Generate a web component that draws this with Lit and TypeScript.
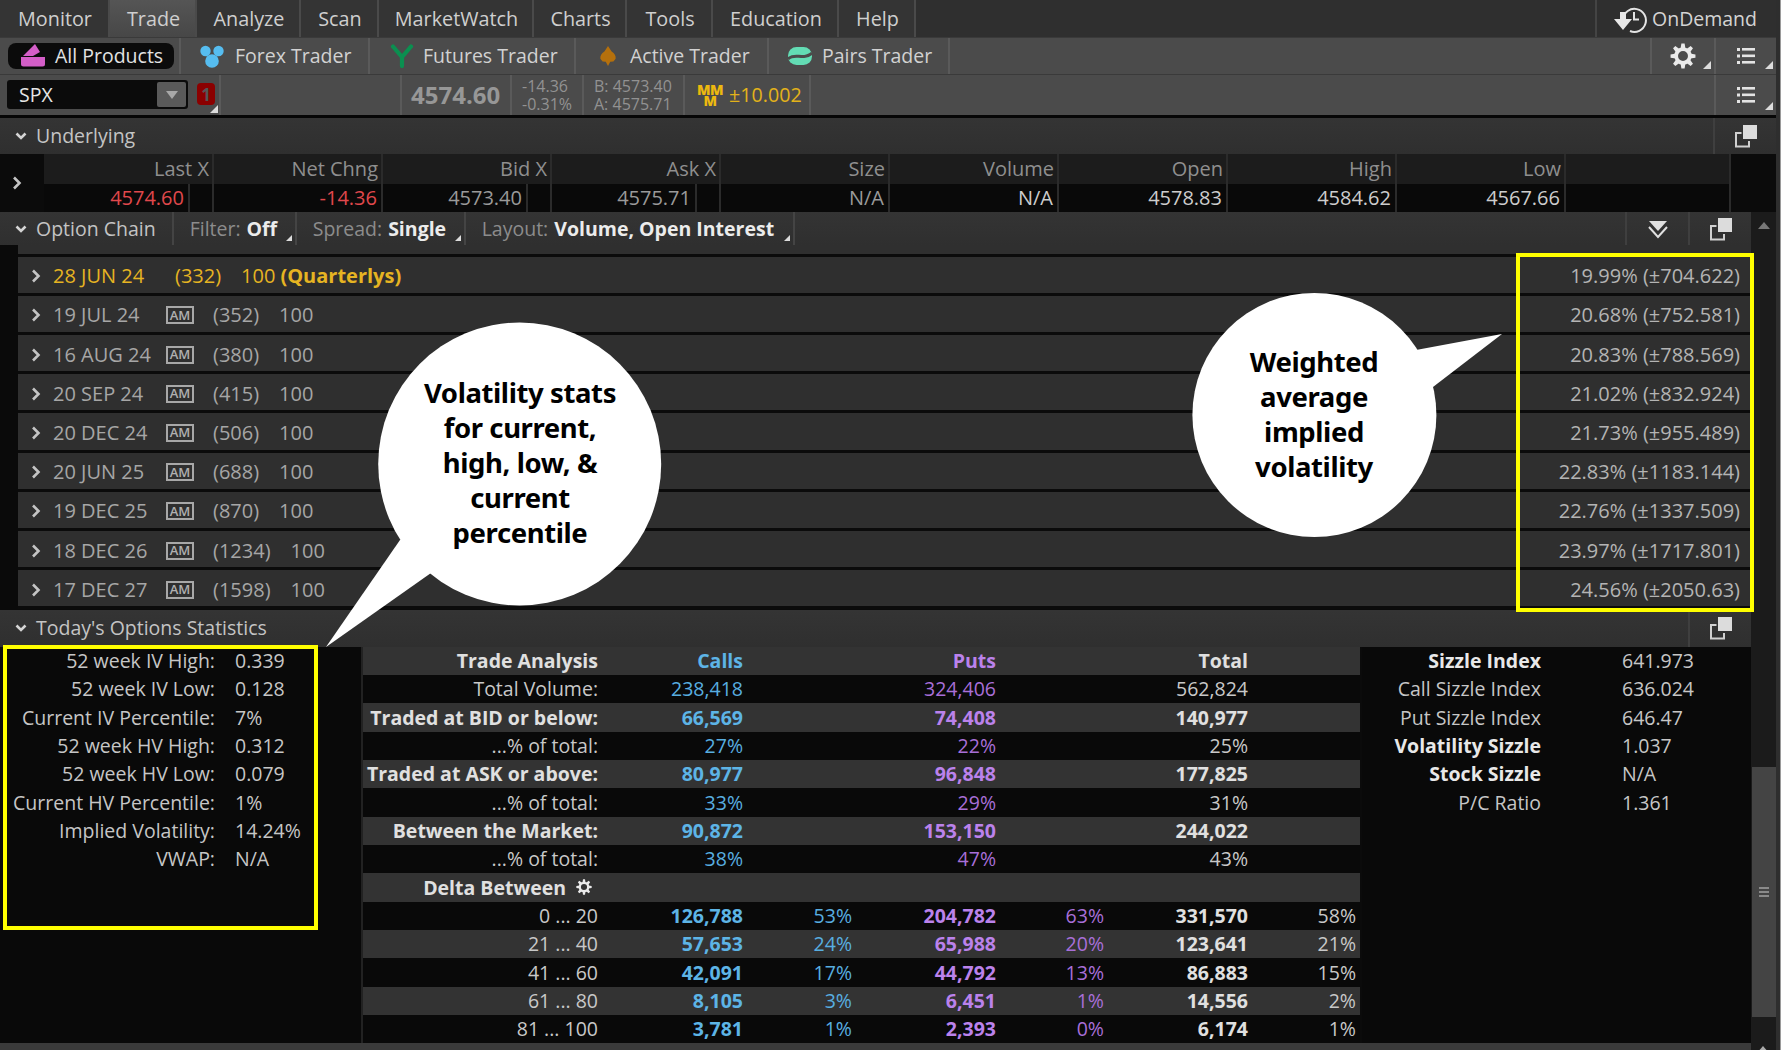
import { LitElement, html, css, svg } from "lit";
import { customElement } from "lit/decorators.js";

const corner = html`<i class="corner"></i>`;
const detach = html`<svg class="detach" viewBox="0 0 24 24" width="24" height="24"><rect x="9" y="1" width="14" height="14" fill="#dcdcdc"/><path d="M7.500 9H2v13.500h13V17" fill="none" stroke="#d0d0d0" stroke-width="2"/></svg>`;
const chevDown = html`<svg class="chev" viewBox="0 0 12 12" width="12" height="12"><path d="M1.500 3.500 6 8l4.500-4.500" fill="none" stroke="#d4d4d4" stroke-width="2.600"/></svg>`;
const chevRight = html`<svg class="chevr" viewBox="0 0 12 14" width="12" height="14"><path d="M3 1.500 8.500 7 3 12.500" fill="none" stroke="#c4c4c4" stroke-width="2.600"/></svg>`;
const listIcon = html`<svg viewBox="0 0 20 20" width="20" height="20"><g fill="#e4e4e4"><rect x="1" y="2" width="3" height="3"/><rect x="1" y="8.500" width="3" height="3"/><rect x="1" y="15" width="3" height="3"/><rect x="6" y="2" width="13" height="2.600"/><rect x="6" y="8.500" width="13" height="2.600"/><rect x="6" y="15" width="13" height="2.600"/></g></svg>`;
const tooth = "M10.500 0.500h3l.8 5h-4.600zM10.500 23.500h3l.8-5h-4.600z";
const gear = (s: number) => html`<svg viewBox="0 0 24 24" width="${s}" height="${s}"><g fill="#eaeaea"><path d="${tooth}"/><path d="${tooth}" transform="rotate(45 12 12)"/><path d="${tooth}" transform="rotate(90 12 12)"/><path d="${tooth}" transform="rotate(135 12 12)"/></g><circle cx="12" cy="12" r="6.300" fill="none" stroke="#eaeaea" stroke-width="3.400"/></svg>`;

const products = [
  { name: "All Products", active: true, w: 24, vb: "0 0 24 24", icon: svg`<path d="M2 12 14 0l5 8-7 4z" fill="#d45ec8"/><path d="M0 13h24v7a2.500 2.500 0 0 1-2.500 2.500h-19A2.500 2.500 0 0 1 0 20z" fill="#d45ec8"/>` },
  { name: "Forex Trader", w: 24, vb: "0 0 24 24", icon: svg`<g fill="#56bdf0"><circle cx="5.500" cy="7" r="5.200"/><circle cx="18.500" cy="7" r="5.200"/><circle cx="12" cy="17" r="6.800"/></g>` },
  { name: "Futures Trader", w: 26, vb: "0 0 24 24", icon: svg`<path d="M3 2.500 12 13 21 2.500M12 13v9" fill="none" stroke="#0b8f50" stroke-width="4.200" stroke-linecap="round"/>` },
  { name: "Active Trader", w: 18, vb: "0 0 20 24", icon: svg`<path d="M10 1 14 7Q19 10 18.500 15L16 18 12.500 18.500 10 23 7.500 18.500 4 18 1.500 15Q1 10 6 7Z" fill="#b5700c"/>` },
  { name: "Pairs Trader", w: 24, vb: "0 0 24 24", icon: svg`<rect x="0" y="3" width="24" height="18" rx="8.500" fill="#63dcb4"/><path d="M0 15C7 8 15 17 24 9" fill="none" stroke="#4b4b4b" stroke-width="3"/>` },
];

const underlying = [
  ["Last X", "4574.60", "red gap24"],
  ["Net Chng", "-14.36", "red"],
  ["Bid X", "4573.40", "gap24"],
  ["Ask X", "4575.71", "gap24"],
  ["Size", "N/A", ""],
  ["Volume", "N/A", "bright"],
  ["Open", "4578.83", "bright"],
  ["High", "4584.62", "bright"],
  ["Low", "4567.66", "bright"],
  ["", "", ""],
];

const chain = [
  ["19 JUL 24", "(352)", "20.68% (±752.581)"],
  ["16 AUG 24", "(380)", "20.83% (±788.569)"],
  ["20 SEP 24", "(415)", "21.02% (±832.924)"],
  ["20 DEC 24", "(506)", "21.73% (±955.489)"],
  ["20 JUN 25", "(688)", "22.83% (±1183.144)"],
  ["19 DEC 25", "(870)", "22.76% (±1337.509)"],
  ["18 DEC 26", "(1234)", "23.97% (±1717.801)"],
  ["17 DEC 27", "(1598)", "24.56% (±2050.63)"],
];

const ivStats = [
  ["52 week IV High:", "0.339"],
  ["52 week IV Low:", "0.128"],
  ["Current IV Percentile:", "7%"],
  ["52 week HV High:", "0.312"],
  ["52 week HV Low:", "0.079"],
  ["Current HV Percentile:", "1%"],
  ["Implied Volatility:", "14.24%"],
  ["VWAP:", "N/A"],
];

const trade: [string, string, string, string, boolean][] = [
  ["Trade Analysis", "Calls", "Puts", "Total", true],
  ["Total Volume:", "238,418", "324,406", "562,824", false],
  ["Traded at BID or below:", "66,569", "74,408", "140,977", true],
  ["...% of total:", "27%", "22%", "25%", false],
  ["Traded at ASK or above:", "80,977", "96,848", "177,825", true],
  ["...% of total:", "33%", "29%", "31%", false],
  ["Between the Market:", "90,872", "153,150", "244,022", true],
  ["...% of total:", "38%", "47%", "43%", false],
];

const delta = [
  ["0 ... 20", "126,788", "53%", "204,782", "63%", "331,570", "58%"],
  ["21 ... 40", "57,653", "24%", "65,988", "20%", "123,641", "21%"],
  ["41 ... 60", "42,091", "17%", "44,792", "13%", "86,883", "15%"],
  ["61 ... 80", "8,105", "3%", "6,451", "1%", "14,556", "2%"],
  ["81 ... 100", "3,781", "1%", "2,393", "0%", "6,174", "1%"],
];

const sizzle: [string, string, boolean][] = [
  ["Sizzle Index", "641.973", true],
  ["Call Sizzle Index", "636.024", false],
  ["Put Sizzle Index", "646.47", false],
  ["Volatility Sizzle", "1.037", true],
  ["Stock Sizzle", "N/A", true],
  ["P/C Ratio", "1.361", false],
];

@customElement("app-root")
export class AppRoot extends LitElement {
  static styles = css`
    :host { display: block; width: 1781px; height: 1050px; }
    * { box-sizing: border-box; }
    .app { position: relative; width: 1781px; height: 1050px; overflow: hidden; display: flex; background: linear-gradient(90deg, #2e2e2e 0 1780px, #9a9a9a 1780px); font: 19.5px/1 "Open Sans", "Noto Sans", sans-serif; color: #c8c8c8; white-space: nowrap; }
    .content { width: 1776px; display: flex; flex-direction: column; background: #0b0b0b; }

    .menu { height: 37px; flex: none; display: flex; background: #2f2f2f; font-size: 19.800px; }
    .tabs { display: grid; grid-template-columns: 110px 87px 104px 78px 155px 93px 86px 126px 77px; }
    .tab { display: flex; align-items: center; justify-content: center; padding-left: 2px; border-right: 2px solid #4a4a4a; color: #cfcfcf; background: #343434; }
    .tab.on { background: linear-gradient(#555, #474747); }
    .menu-fill { flex: 1; }
    .ondemand { width: 181px; display: flex; align-items: center; gap: 5px; padding-left: 16px; border-left: 2px solid #444; color: #d4d4d4; font-size: 19.500px; }

    .products { height: 37px; flex: none; display: flex; background: #4b4b4b; border-top: 1px solid #3a3a3a; }
    .prod { display: flex; align-items: center; border-right: 2px solid #5a5a5a; color: #d2d2d2; }
    .prod svg { flex: none; }
    .prod0 { width: 181px; padding-left: 8px; }
    .pill { width: 166px; height: 26px; background: #0b0b0b; border-radius: 8px; display: flex; align-items: center; gap: 10px; padding-left: 13px; color: #e2e2e2; }
    .prod1 { width: 189px; padding-left: 19px; gap: 11px; }
    .prod2 { width: 206px; padding-left: 19px; gap: 8px; }
    .prod3 { width: 193px; padding-left: 23px; gap: 13px; }
    .prod4 { width: 181px; padding-left: 19px; gap: 10px; }
    .fill { flex: 1; }
    .toolbtn { position: relative; display: flex; align-items: center; justify-content: center; border-left: 2px solid #5a5a5a; }
    .gearbtn { width: 64px; }
    .listbtn { width: 62px; }
    .corner { position: absolute; right: 3px; bottom: 5px; width: 0; height: 0; border-left: 8px solid transparent; border-bottom: 8px solid #dcdcdc; }

    .quote { height: 41px; flex: none; display: flex; background: #4b4b4b; border-top: 1px solid #3a3a3a; }
    .combo { margin: 5px 0 0 7px; width: 181px; height: 29px; background: #0b0b0b; border-radius: 3px; display: flex; align-items: center; justify-content: space-between; padding: 0 2px 0 12px; color: #e6e6e6; }
    .caret { width: 29px; height: 25px; background: #5a5a5a; border-radius: 2px; display: flex; align-items: center; justify-content: center; }
    .caret i { border: 6px solid transparent; border-top: 8px solid #a8a8a8; border-bottom: 0; }
    .badgewrap { position: relative; width: 33px; border-right: 2px solid #5a5a5a; padding: 8px 0 0 9px; }
    .badge { width: 18px; height: 22px; background: #8b0000; border-radius: 4px; display: flex; align-items: center; justify-content: center; color: #555; font-size: 17px; font-weight: 700; }
    .badgewrap .corner { right: 1px; bottom: 2px; }
    .gap181 { width: 181px; border-right: 2px solid #5a5a5a; }
    .q { display: flex; align-items: center; border-right: 2px solid #5a5a5a; color: #a0a0a0; }
    .price { width: 110px; padding-left: 9px; font-size: 24px; font-weight: 700; color: #979797; }
    .two { flex-direction: column; align-items: flex-start; justify-content: center; font-size: 16px; line-height: 18px; color: #929292; }
    .chg { width: 72px; padding-left: 10px; }
    .ba { width: 101px; padding-left: 10px; }
    .mm { width: 126px; padding-left: 11px; gap: 5px; color: #e3b21a; font-size: 19.700px; }
    .mmg { display: flex; flex-direction: column; align-items: center; font-size: 14px; font-weight: 800; line-height: 11px; color: #edb90f; width: 28px; letter-spacing: -0.5px; }

    .rule { height: 3px; flex: none; background: #060606; }

    .secthead { display: flex; align-items: center; height: 36px; background: linear-gradient(#343434, #2f2f2f); color: #c4c4c4; flex: none; }
    .secthead .chev { margin: 0 9px 0 15px; flex: none; }
    .sh-btn { height: 100%; display: flex; align-items: center; justify-content: center; border-left: 2px solid #3f3f3f; }
    .sh-u { width: 63px; }

    .u-table { height: 58px; flex: none; display: flex; background: #0b0b0b; font-size: 20px; }
    .u-toggle { width: 44px; display: flex; align-items: center; padding-left: 11px; }
    .u-grid { width: 1687px; display: grid; grid-template-columns: 170px repeat(8, 169px) 1fr; }
    .u-col { border-right: 2px solid #2b2b2b; }
    .u-h { height: 30px; background: #1c1c1c; color: #8f8f8f; text-align: right; padding: 5px 3px 0 0; }
    .u-d { height: 28px; background: #090909; color: #9a9a9a; text-align: right; padding: 4px 4px 0 0; }
    .u-d.red { color: #e0484c; }
    .u-d.bright { color: #cdcdcd; }
    .u-d.gap24 { padding-right: 0; }
    .u-d.gap24 span { display: inline-block; padding-right: 3px; margin-right: 1px; }
    .u-d.gap24 em { font-style: normal; display: inline-block; width: 2px; height: 28px; background: #2b2b2b; margin: -4px 22px -4px 0; vertical-align: top; }

    .lower { flex: 1; display: flex; min-height: 0; }
    .left { width: 1751px; display: flex; flex-direction: column; }
    .scroll { width: 25px; background: #1b1b1b; position: relative; display: flex; flex-direction: column; align-items: center; }
    .up { margin-top: 10px; border: 6px solid transparent; border-bottom: 7px solid #777; border-top: 0; }
    .thumb { position: absolute; top: 555px; left: 1px; width: 24px; height: 250px; background: #444; display: flex; align-items: center; justify-content: center; }
    .grip { width: 10px; height: 10px; background: repeating-linear-gradient(#8a8a8a 0 2px, transparent 2px 4px); }
    .up2 { position: absolute; bottom: -3px; left: 6px; border: 6px solid transparent; border-bottom: 7px solid #aaa; border-top: 0; }

    .ch-head { height: 33px; }
    .f { height: 100%; display: flex; align-items: center; position: relative; border-left: 2px solid #444; color: #8c8c8c; gap: 6px; }
    .f b { color: #ececec; font-weight: 700; }
    .f .corner { right: 3px; bottom: 4px; border-left-width: 6px; border-bottom-width: 6px; }
    .f1 { margin-left: 16px; width: 123px; padding-left: 16px; }
    .f2 { width: 169px; padding-left: 16px; }
    .f3 { width: 329px; padding-left: 16px; }
    .f4 { width: 1px; padding: 0; }
    .down { width: 63px; }
    .det2 { width: 63px; }

    .chainbody { height: 364.500px; flex: none; display: flex; flex-direction: column; background: #0a0a0a; padding-left: 18px; }
    .sliver { height: 11.500px; flex: none; background: #2f2f2f; border-bottom: 3px solid #0b0b0b; }
    .crow { flex: 1; display: flex; align-items: center; background: #2f2f2f; border-bottom: 3px solid #0b0b0b; color: #a6a6a6; padding: 3px 11px 0 0; font-size: 20px; }
    .crow .chevr { margin: 0 11px 0 12px; }
    .crow.gold { color: #e6b422; }
    .date { width: 113px; }
    .am { width: 28px; height: 18px; margin-right: 19px; border: 2px solid #a8a8a8; font-size: 13px; font-weight: 600; display: flex; align-items: center; justify-content: center; color: #b0b0b0; }
    .cnt { margin-right: 20px; }
    .gold .date { width: 122px; }
    .gold .hundred { margin-right: 5px; }
    .gold b { font-weight: 700; }
    .rv { margin-left: auto; color: #b4b4b4; }

    .stats { flex: 1; display: flex; flex-direction: column; min-height: 0; }
    .st-head { height: 37.200px; }
    .st-head .spacer { flex: 1; }
    .st-body { flex: none; height: 396px; display: grid; grid-template-columns: 363px 997px 1fr; background: #090909; }
    .st-foot { flex: 1; background: #3a3a3a; }
    .iv { display: grid; grid-template-columns: 215px 1fr; grid-auto-rows: 28.330px; column-gap: 20px; border-right: 2px solid #222; align-content: start; }
    .k, .v { display: flex; align-items: center; color: #c6c6c6; }
    .k { justify-content: flex-end; }
    .t { display: grid; grid-template-columns: 239px 145px 109px 144px 108px 144px 108px; grid-auto-rows: 28.330px; }
    .t > div { display: flex; align-items: center; justify-content: flex-end; padding-right: 4px; color: #c8c8c8; }
    .t .g { background: #333; }
    .t .bk { background: #090909; }
    .t .b { font-weight: 700; color: #e0e0e0; }
    .t .c { color: #58aee0; }
    .t .c.b { color: #5db4e6; }
    .t .p { color: #a86fd8; }
    .t .p.b { color: #bb82ec; }
    .t .delta { gap: 10px; padding-right: 10px; }
    .sz { display: grid; grid-template-columns: 179px 1fr; grid-auto-rows: 28.330px; column-gap: 81px; border-left: 2px solid #0b0b0b; align-content: start; }
    .sz .k.b { font-weight: 700; color: #e8e8e8; }

    .callouts { position: absolute; left: 0; top: 0; pointer-events: none; }
    .yb { position: absolute; border: 4px solid #ffff00; }
    .yb1 { left: 1516px; top: 253px; width: 238px; height: 359px; }
    .yb2 { left: 3px; top: 645px; width: 315px; height: 285px; }
    .bt { position: absolute; color: #000; font: 700 27.500px/35px "Noto Sans", sans-serif; text-align: center; letter-spacing: -0.4px; }
    .bt1 { left: 400px; top: 375px; width: 240px; }
    .bt2 { left: 1214px; top: 344px; width: 200px; }
  `;

  render() {
    const tabs = ["Monitor", "Trade", "Analyze", "Scan", "MarketWatch", "Charts", "Tools", "Education", "Help"];
    return html`<div class="app">
      <div class="content">
        <div class="menu">
          <div class="tabs">${tabs.map((t) => html`<div class="tab ${t === "Trade" ? "on" : ""}">${t}</div>`)}</div>
          <div class="menu-fill"></div>
          <div class="ondemand">
            <svg viewBox="0 0 34 28" width="34" height="28"><path d="M10 14A11.500 11.500 0 1 1 17 26" fill="none" stroke="#e4e4e4" stroke-width="2"/><path d="M21 7v7.500h5" fill="none" stroke="#e4e4e4" stroke-width="2"/><path d="M1 14h6V7h6v7h6l-9 11z" fill="#e8e8e8"/></svg>
            OnDemand
          </div>
        </div>
        <div class="products">
          ${products.map((p, i) => {
            const icon = html`<svg viewBox="${p.vb}" width="${p.w}" height="24">${p.icon}</svg>`;
            return html`<div class="prod prod${i}">${p.active ? html`<div class="pill">${icon}${p.name}</div>` : html`${icon}${p.name}`}</div>`;
          })}
          <div class="fill"></div>
          <div class="toolbtn gearbtn">${gear(26)}${corner}</div>
          <div class="toolbtn listbtn">${listIcon}${corner}</div>
        </div>
        <div class="quote">
          <div class="combo">SPX<div class="caret"><i></i></div></div>
          <div class="badgewrap"><div class="badge">1</div>${corner}</div>
          <div class="gap181"></div>
          <div class="q price">4574.60</div>
          <div class="q two chg"><span>-14.36</span><span>-0.31%</span></div>
          <div class="q two ba"><span>B: 4573.40</span><span>A: 4575.71</span></div>
          <div class="q mm"><span class="mmg"><span>MM</span><span>M</span></span>±10.002</div>
          <div class="fill"></div>
          <div class="toolbtn listbtn">${listIcon}${corner}</div>
        </div>
        <div class="rule"></div>

        <div class="secthead">
          ${chevDown}<span>Underlying</span>
          <div class="fill"></div>
          <div class="sh-btn sh-u">${detach}</div>
        </div>
        <div class="u-table">
          <div class="u-toggle">${chevRight}</div>
          <div class="u-grid">
            ${underlying.map((u) => html`<div class="u-col"><div class="u-h">${u[0]}</div>
              <div class="u-d ${u[2]}">${u[2].includes("gap24") ? html`<span>${u[1]}</span><em></em>` : u[1]}</div></div>`)}
          </div>
        </div>

        <div class="lower">
          <div class="left">
            <div class="secthead ch-head">
              ${chevDown}<span>Option Chain</span>
              <div class="f f1">Filter: <b>Off</b>${corner}</div>
              <div class="f f2">Spread: <b>Single</b>${corner}</div>
              <div class="f f3">Layout: <b>Volume, Open Interest</b>${corner}</div>
              <div class="f f4"></div>
              <div class="fill"></div>
              <div class="sh-btn down"><svg viewBox="0 0 20 20" width="20" height="20"><path d="M1 2h18L10 12z" fill="#e0e0e0"/><path d="M1 8l9 10 9-10" fill="none" stroke="#e0e0e0" stroke-width="2"/></svg></div>
              <div class="sh-btn det2">${detach}</div>
            </div>
            <div class="chainbody">
              <div class="sliver"></div>
              <div class="crow gold">${chevRight}<span class="date">28 JUN 24</span><span class="cnt">(332)</span><span class="hundred">100</span><b>(Quarterlys)</b><span class="rv">19.99% (±704.622)</span></div>
              ${chain.map((c) => html`<div class="crow">${chevRight}<span class="date">${c[0]}</span><span class="am">AM</span><span class="cnt">${c[1]}</span><span>100</span><span class="rv">${c[2]}</span></div>`)}
            </div>
            <div class="stats">
              <div class="secthead st-head">
                ${chevDown}<span>Today's Options Statistics</span>
                <div class="spacer"></div>
                <div class="sh-btn det2">${detach}</div>
              </div>
              <div class="st-body">
                <div class="iv">
                  ${ivStats.map((s) => html`<div class="k">${s[0]}</div><div class="v">${s[1]}</div>`)}
                </div>
                <div class="t">
                  ${trade.map((r, i) => {
                    const bg = i % 2 === 0 ? "g" : "bk";
                    const b = r[4] ? "b" : "";
                    return html`<div class="${bg} ${b}">${r[0]}</div><div class="${bg} ${b} c">${r[1]}</div><div class="${bg}"></div><div class="${bg} ${b} p">${r[2]}</div><div class="${bg}"></div><div class="${bg} ${b}">${r[3]}</div><div class="${bg}"></div>`;
                  })}
                  <div class="g b delta">Delta Between ${gear(16)}</div><div class="g"></div><div class="g"></div><div class="g"></div><div class="g"></div><div class="g"></div><div class="g"></div>
                  ${delta.map((r, i) => {
                    const bg = i % 2 === 0 ? "bk" : "g";
                    return html`<div class="${bg}">${r[0]}</div><div class="${bg} b c">${r[1]}</div><div class="${bg} c">${r[2]}</div><div class="${bg} b p">${r[3]}</div><div class="${bg} p">${r[4]}</div><div class="${bg} b">${r[5]}</div><div class="${bg}">${r[6]}</div>`;
                  })}
                </div>
                <div class="sz">
                  ${sizzle.map((s) => html`<div class="k ${s[2] ? "b" : ""}">${s[0]}</div><div class="v">${s[1]}</div>`)}
                </div>
              </div>
              <div class="st-foot"></div>
            </div>
          </div>
          <div class="scroll">
            <i class="up"></i>
            <div class="thumb"><div class="grip"></div></div>
            <i class="up2"></i>
          </div>
        </div>
      </div>

      <svg class="callouts" width="1781" height="1050" viewBox="0 0 1781 1050">
        <circle cx="519.700" cy="464" r="141.500" fill="#fff"/>
        <path d="M400 540 326 647 431 573 500 500Z" fill="#fff"/>
        <circle cx="1314.400" cy="415" r="122" fill="#fff"/>
        <path d="M1416 350 1502 334 1433 387 1380 400Z" fill="#fff"/>
      </svg>
      <div class="yb yb1"></div>
      <div class="yb yb2"></div>
      <div class="bt bt1">Volatility stats<br />for current,<br />high, low, &amp;<br />current<br />percentile</div>
      <div class="bt bt2">Weighted<br />average<br />implied<br />volatility</div>
    </div>`;
  }
}
